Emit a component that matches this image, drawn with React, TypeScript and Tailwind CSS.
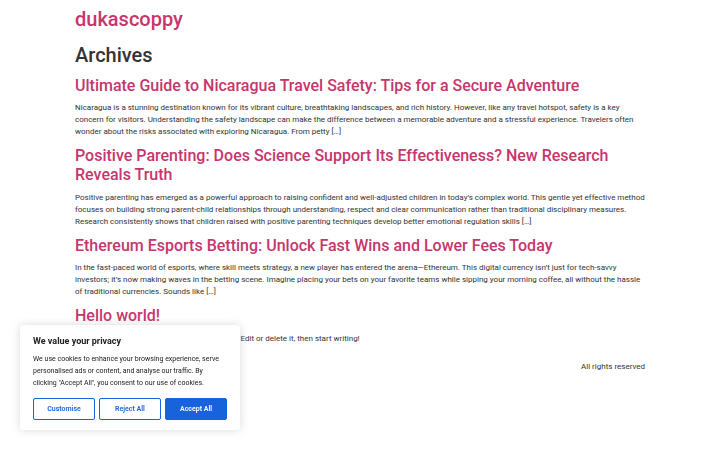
const posts = [
  {
    title: "Ultimate Guide to Nicaragua Travel Safety: Tips for a Secure Adventure",
    excerpt:
      "Nicaragua is a stunning destination known for its vibrant culture, breathtaking landscapes, and rich history. However, like any travel hotspot, safety is a key concern for visitors. Understanding the safety landscape can make the difference between a memorable adventure and a stressful experience. Travelers often wonder about the risks associated with exploring Nicaragua. From petty […]",
  },
  {
    title: "Positive Parenting: Does Science Support Its Effectiveness? New Research Reveals Truth",
    excerpt:
      "Positive parenting has emerged as a powerful approach to raising confident and well-adjusted children in today’s complex world. This gentle yet effective method focuses on building strong parent-child relationships through understanding, respect and clear communication rather than traditional disciplinary measures. Research consistently shows that children raised with positive parenting techniques develop better emotional regulation skills […]",
  },
  {
    title: "Ethereum Esports Betting: Unlock Fast Wins and Lower Fees Today",
    excerpt:
      "In the fast-paced world of esports, where skill meets strategy, a new player has entered the arena—Ethereum. This digital currency isn’t just for tech-savvy investors; it’s now making waves in the betting scene. Imagine placing your bets on your favorite teams while sipping your morning coffee, all without the hassle of traditional currencies. Sounds like […]",
  },
  {
    title: "Hello world!",
    excerpt: "Welcome to WordPress. This is your first post. Edit or delete it, then start writing!",
  },
];

function CookieBanner() {
  return (
    <div className="fixed left-[20px] bottom-[20px] w-[220px] bg-white rounded-[3px] px-[13px] pt-[10px] pb-[10px] shadow-[0_0_8px_rgba(150,150,150,0.35)]">
      <p className="text-[9px] leading-[12px] font-bold text-[#212121]">We value your privacy</p>
      <p className="mt-[6px] text-[7px] leading-[12px] text-[#212121]">
        We use cookies to enhance your browsing experience, serve personalised ads or content, and analyse our traffic. By
        clicking "Accept All", you consent to our use of cookies.
      </p>
      <div className="mt-[9px] grid grid-cols-3 gap-[4px]">
        <button className="h-[22px] border border-[#1863dc] rounded-[2px] text-[7px] font-semibold text-[#1863dc] bg-white">
          Customise
        </button>
        <button className="h-[22px] border border-[#1863dc] rounded-[2px] text-[7px] font-semibold text-[#1863dc] bg-white">
          Reject All
        </button>
        <button className="h-[22px] border border-[#1863dc] rounded-[2px] text-[7px] font-semibold text-white bg-[#1863dc]">
          Accept All
        </button>
      </div>
    </div>
  );
}

export default function App() {
  return (
    <div className="min-h-[450px] bg-white font-['Roboto',sans-serif] text-[#333]">
      <div className="mx-auto w-[570px] pt-[7px]">
        <header>
          <p className="text-[20px] leading-[24px] font-medium text-[#c6366c]">dukascoppy</p>
        </header>
        <main className="mt-[12px]">
          <h1 className="text-[20px] leading-[24px] font-medium text-[#333] mb-[8.5px]">Archives</h1>
          {posts.map((p) => (
            <article key={p.title}>
              <h2 className="text-[16px] leading-[19px] font-medium text-[#c6366c] mb-[7.5px]">{p.title}</h2>
              <p className="text-[8px] leading-[12px] mb-[8px]">{p.excerpt}</p>
            </article>
          ))}
        </main>
        <footer className="mt-[16px] flex justify-end">
          <p className="text-[8px] leading-[12px]">All rights reserved</p>
        </footer>
      </div>
      <CookieBanner />
    </div>
  );
}
